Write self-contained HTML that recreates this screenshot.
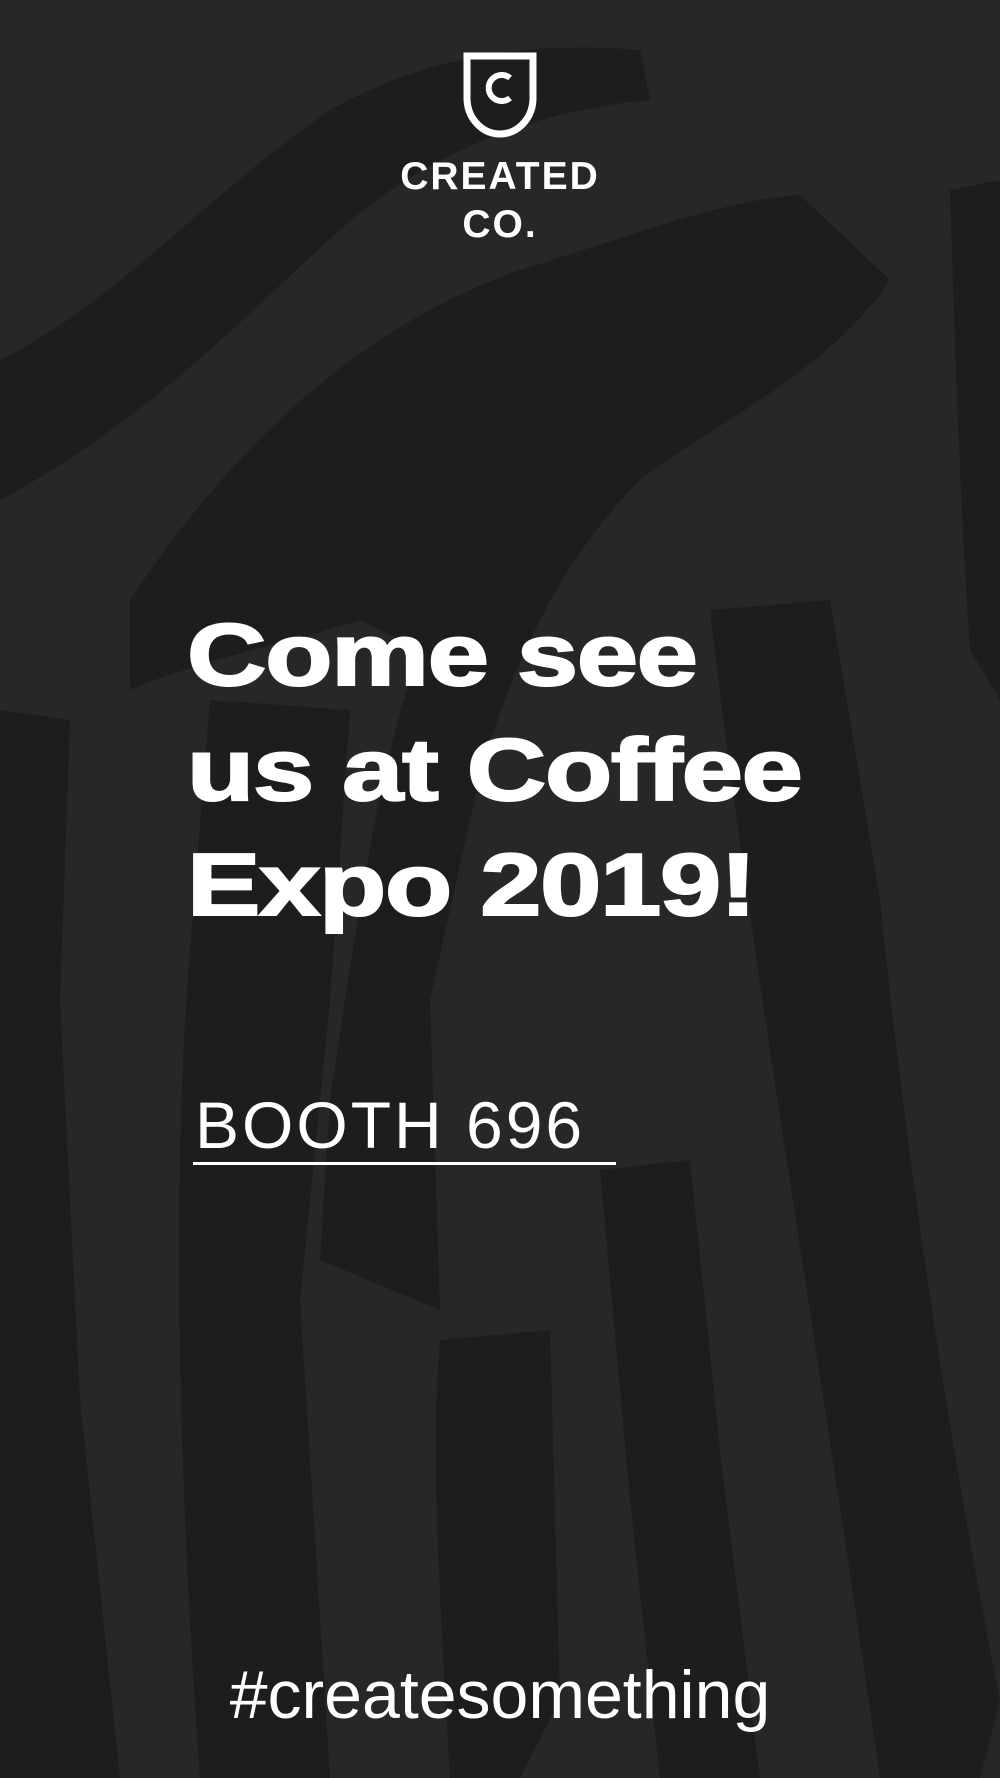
<!DOCTYPE html>
<html><head><meta charset="utf-8"><style>
html,body{margin:0;padding:0;}
body{width:1000px;height:1778px;background:#272727;position:relative;overflow:hidden;font-family:"Liberation Sans",sans-serif;color:#fff;}
svg.bg{position:absolute;left:0;top:0;}
.t{position:absolute;white-space:nowrap;}
</style></head><body>
<svg class="bg" width="1000" height="1778" viewBox="0 0 1000 1778">
<g fill="#1d1d1d">
<path d="M0 360 C120 300 200 200 330 110 C420 60 520 40 640 50 L650 100 C540 110 430 150 340 230 C250 310 150 420 0 500 Z"/>
<path d="M130 600 C250 420 380 320 520 270 C620 240 720 200 800 195 L890 280 C830 370 720 420 640 480 C560 560 500 680 470 820 L430 1000 L440 1310 L320 1260 L330 1100 C360 900 380 760 420 650 L360 620 C300 640 200 660 130 690 Z"/>
<path d="M710 610 L830 600 L880 900 C900 1100 940 1400 1000 1700 L980 1778 L880 1778 C840 1500 800 1250 770 1050 C740 850 720 700 710 610 Z"/>
<path d="M210 700 L350 710 L330 1000 L300 1300 L330 1778 L200 1778 C180 1500 170 1200 190 950 Z"/>
<path d="M0 710 L70 720 L60 1000 L80 1400 L120 1778 L0 1778 Z"/>
<path d="M440 1340 L550 1330 L560 1700 L520 1778 L450 1778 C440 1600 430 1450 440 1340 Z"/>
<path d="M600 1170 L690 1160 L720 1450 L760 1778 L660 1778 L630 1500 Z"/>
<path d="M950 190 L1000 180 L1000 700 L970 650 C960 500 955 350 950 190 Z"/>
</g>
</svg>
<svg style="position:absolute;left:463px;top:52px" width="74" height="86" viewBox="0 0 74 86">
<path d="M4 4 H70 V46 C70 66 55 82 37 82 C19 82 4 66 4 46 Z" fill="none" stroke="#fff" stroke-width="7"/>
<path d="M47 26 A13 13 0 1 0 47 46" fill="none" stroke="#fff" stroke-width="6"/>
</svg>
<div class="t" style="left:0;width:1000px;text-align:center;top:153px;font-size:39px;font-weight:bold;line-height:48px;letter-spacing:2px;">CREATED<br>CO.</div>
<div class="t" style="left:187px;top:597px;font-size:88px;font-weight:bold;line-height:115px;letter-spacing:-1px;-webkit-text-stroke:2px #fff;transform:scaleX(1.25);transform-origin:0 0;">Come see<br>us at Coffee<br>Expo 2019!</div>
<div class="t" style="left:195px;top:1085px;font-size:66px;font-weight:300;line-height:80px;letter-spacing:3px;">BOOTH 696</div>
<div style="position:absolute;left:193px;top:1162px;width:423px;height:3px;background:#fff;"></div>
<div class="t" style="left:0;width:1000px;text-align:center;top:1655px;font-size:68px;line-height:80px;">#createsomething</div>
</body></html>
